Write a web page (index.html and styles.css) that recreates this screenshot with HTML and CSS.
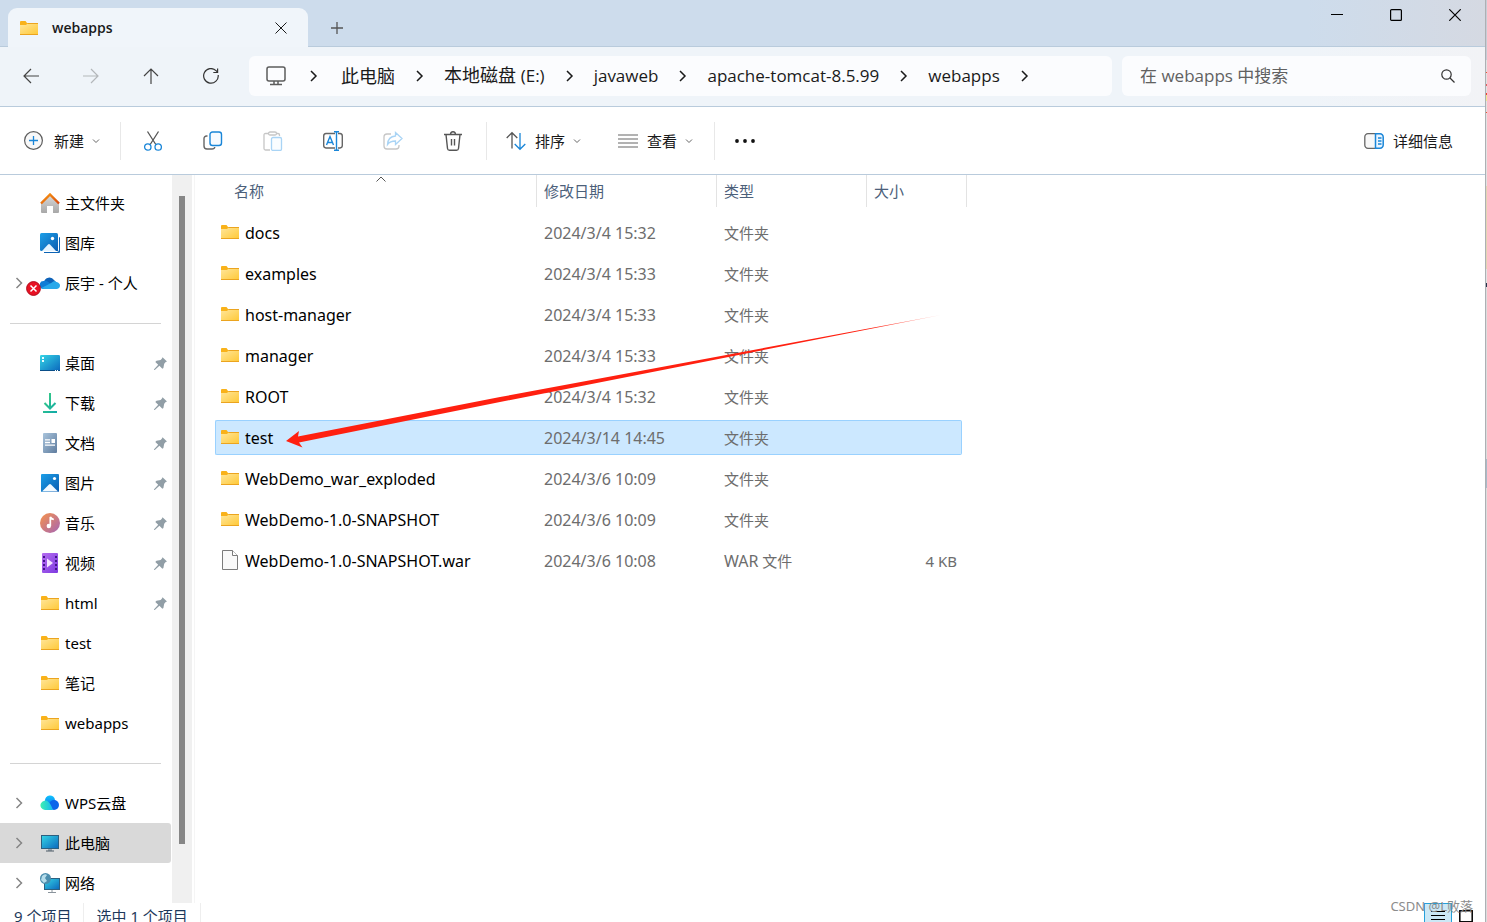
FILE: index.html
```html
<!DOCTYPE html>
<html lang="zh-CN">
<head>
<meta charset="utf-8">
<title>webapps</title>
<link rel="stylesheet" href="styles.css">
</head>
<body>
<svg class="sprite" width="0" height="0" aria-hidden="true">
  <defs>
    <linearGradient id="gFolder" x1="0" y1="0" x2="1" y2="1"><stop offset="0" stop-color="#ffe69a"/><stop offset="1" stop-color="#ffc938"/></linearGradient>
    <linearGradient id="gRoof" x1="0" y1="0" x2="1" y2="1"><stop offset="0" stop-color="#fb9a10"/><stop offset="1" stop-color="#d8470f"/></linearGradient>
    <linearGradient id="gWall" x1="0" y1="0" x2="0" y2="1"><stop offset="0" stop-color="#dcdcdc"/><stop offset="1" stop-color="#a8a8a8"/></linearGradient>
    <linearGradient id="gPic" x1="0" y1="0" x2="1" y2="1"><stop offset="0" stop-color="#1c9fe8"/><stop offset="1" stop-color="#0a5cb0"/></linearGradient>
    <linearGradient id="gScreen" x1="0" y1="0" x2="1" y2="1"><stop offset="0" stop-color="#35d6e6"/><stop offset="1" stop-color="#0b67bd"/></linearGradient>
    <linearGradient id="gDown" x1="0" y1="0" x2="1" y2="1"><stop offset="0" stop-color="#3ecf80"/><stop offset="1" stop-color="#10aaa8"/></linearGradient>
    <linearGradient id="gDoc" x1="0" y1="0" x2="1" y2="1"><stop offset="0" stop-color="#a9c4dc"/><stop offset="1" stop-color="#5f7c9e"/></linearGradient>
    <linearGradient id="gMusic" x1="0" y1="0" x2="1" y2="1"><stop offset="0" stop-color="#f7934a"/><stop offset="1" stop-color="#a565b5"/></linearGradient>
    <linearGradient id="gVideo" x1="0" y1="0" x2="1" y2="1"><stop offset="0" stop-color="#b56df0"/><stop offset="1" stop-color="#7d3ae0"/></linearGradient>
    <linearGradient id="gWps" x1="0" y1="0" x2="1" y2="0"><stop offset="0" stop-color="#3ff0b0"/><stop offset="1" stop-color="#16b8f2"/></linearGradient>
    <linearGradient id="gWpsTop" x1="0" y1="0" x2="0" y2="1"><stop offset="0" stop-color="#10c4ff"/><stop offset="1" stop-color="#0a5fe0"/></linearGradient>
  </defs>
  <symbol id="folder" viewBox="0 0 20 20"><path d="M1 4a1 1 0 0 1 1-1h4.500l1.500 2h11v3H1z" fill="#f9b21a"/><path d="M1 7h6l1.500-1.500H19V16.500H1z" fill="url(#gFolder)"/><path d="M8.500 5.500H19M1 16.500h18" stroke="#eba41f" fill="none"/></symbol>
  <symbol id="file" viewBox="0 0 20 20"><path d="M2.500.5h10l5 5v14h-15z" fill="#f9f9f9" stroke="#7b7b7b"/><path d="M12.500.5v5h5" fill="#fff" stroke="#7b7b7b"/></symbol>
  <symbol id="home" viewBox="0 0 20 20"><path d="M1 9l9-8 9 8v10a1 1 0 0 1-1 1h-5v-7H7v7H2a1 1 0 0 1-1-1z" fill="url(#gWall)"/><path d="M1 10.500L10 1.500l9 9" fill="none" stroke="url(#gRoof)" stroke-width="2.400"/></symbol>
  <symbol id="gallery" viewBox="0 0 20 20"><path d="M4 4h15a1 1 0 0 1 1 1v14a1 1 0 0 1-1 1H4z" fill="#0c63b4"/><path d="M2 18.500h15.500q1 0 1-1V2" fill="none" stroke="#fff"/><rect width="18" height="18" rx="1.500" fill="url(#gPic)"/><path d="M2 18L8 11.500q1-1 2 0L16 18z" fill="#e3f3ff"/><circle cx="12.500" cy="5.500" r="1.700" fill="#fff"/></symbol>
  <symbol id="onedrive" viewBox="0 0 20 20"><path d="M4 9a5.500 5.500 0 0 1 10-2l4 4-8 3z" fill="#0d62b8"/><path d="M4 16a4 4 0 0 1-.5-8q3-1 5.500 1.500l4 3z" fill="#0f7cd6"/><path d="M4 16q-1.500 0-2.500-1L12 9.500q2-2 4.500-.5 3.500 1 3.500 3.500T17 16z" fill="#28a8ea"/></symbol>
  <symbol id="desktop" viewBox="0 0 20 20"><rect y="2" width="20" height="16" rx="1.300" fill="url(#gScreen)"/><path d="M0 17.500h20" stroke="#0a4e88"/><path d="M2 4h2v2H2zM2 7h2v2H2z" fill="#e9fdff"/><path d="M15 17.500h4" stroke="#fff" stroke-dasharray="1 1"/></symbol>
  <symbol id="download" viewBox="0 0 20 20"><path d="M10 0v15M4.500 10l5.500 5.500 5.500-5.500M3 19h14" fill="none" stroke="url(#gDown)" stroke-width="2"/></symbol>
  <symbol id="doc" viewBox="0 0 20 20"><rect x="3" width="14" height="20" rx="1" fill="url(#gDoc)"/><path d="M5 6.800h5M5 9.500h5M5 12.200h10" stroke="#fff" stroke-width="1.300"/><path d="M11.500 6H15v4h-3.500z" fill="#fff"/></symbol>
  <symbol id="picture" viewBox="0 0 20 20"><rect x="1" y="1" width="18" height="18" rx="1" fill="url(#gPic)"/><path d="M2 18.500l7-7q1-1 2 0l7 7z" fill="#f3faff"/><circle cx="14.500" cy="5.500" r="1.600" fill="#fff"/></symbol>
  <symbol id="music" viewBox="0 0 20 20"><circle cx="10" cy="10" r="10" fill="url(#gMusic)"/><circle cx="8.800" cy="13" r="2.200" fill="#fff"/><path d="M10.300 13V4q1 2 3.500 2.500" fill="none" stroke="#fff" stroke-width="1.700"/></symbol>
  <symbol id="video" viewBox="0 0 20 20"><rect x="2" width="16" height="20" rx="1" fill="url(#gVideo)"/><path d="M4 3v16M16 3v16" stroke="#42158a" stroke-width="2" stroke-dasharray="2 2"/><path d="M7 5.500l6 4.500-6 4.500z" fill="#f3e6ff"/></symbol>
  <symbol id="wps" viewBox="0 0 20 20"><path d="M5 8a5 5 0 0 1 10-1l1 6-6 3z" fill="url(#gWpsTop)"/><circle cx="14" cy="12" r="5" fill="#0b66ea"/><path d="M5 17a4.700 4.700 0 1 1 3.500-8q2 1.500 4.500 8z" fill="url(#gWps)"/></symbol>
  <symbol id="pc" viewBox="0 0 20 20"><rect x="1.500" y="2.500" width="17" height="13" fill="url(#gScreen)" stroke="#2c6080"/><path d="M8 16h4v2H8z" fill="#9aa4ac"/><path d="M6 18h8" stroke="#4c5a66"/></symbol>
  <symbol id="network" viewBox="0 0 20 20"><rect x="4.500" y="5.500" width="15" height="11" fill="url(#gScreen)" stroke="#2c6080"/><path d="M12 17v2M8 19.500h8" stroke="#8a949c"/><circle cx="5.500" cy="5.500" r="5.500" fill="#4c8dad"/><path d="M2 3q3-3 5-1L5 5l2 3-3 2-3-3z" fill="#b5dcea"/></symbol>
  <symbol id="pin" viewBox="0 0 13 13"><path d="M8.500 0.300L13 4.500l-1.300.6-1.500 1.600-.8 4.300-1 .8-3-3L.8 12.900H.1v-.7L4.200 7.700 1.300 5l1.200-1.200 4.100-.7L8 1.600z" fill="#919ea6"/></symbol>
  <symbol id="right" viewBox="0 0 8 12"><path d="M1.500 1l5 5-5 5" fill="none" stroke="currentColor" stroke-width="1.500"/></symbol>
  <symbol id="down" viewBox="0 0 8 8"><path d="M1 2.500l3 3 3-3" fill="none" stroke="currentColor"/></symbol>
</svg>

<div class="window">
  <header class="titlebar">
    <div class="tab">
      <svg class="icon"><use href="#folder"/></svg>
      <span class="tab-title">webapps</span>
      <button class="plain tab-close" aria-label="关闭标签页"><svg width="12" height="12" viewBox="0 0 12 12"><path d="M.5.5l11 11M11.500.5l-11 11" stroke="currentColor"/></svg></button>
    </div>
    <button class="plain tab-new" aria-label="新建标签页"><svg width="12" height="12" viewBox="0 0 12 12"><path d="M6 0v12M0 6h12" stroke="#555" stroke-width="1.300"/></svg></button>
    <div class="caption">
      <button class="plain" aria-label="最小化"><svg width="12" height="12" viewBox="0 0 12 12"><path d="M0 5.500h12" stroke="#000"/></svg></button>
      <button class="plain" aria-label="最大化"><svg width="12" height="12" viewBox="0 0 12 12"><rect x=".6" y=".6" width="10.800" height="10.800" rx="1" fill="none" stroke="#000" stroke-width="1.200"/></svg></button>
      <button class="plain" aria-label="关闭"><svg width="12" height="12" viewBox="0 0 12 12"><path d="M.3.3l11.400 11.400M11.700.3L.3 11.700" stroke="#000" stroke-width="1.200"/></svg></button>
    </div>
  </header>

  <div class="navbar">
    <div class="nav-buttons">
      <button class="plain" aria-label="后退"><svg width="16" height="16" viewBox="0 0 16 16" fill="none" stroke="#444" stroke-width="1.200"><path d="M16 8H1M8 1L1 8l7 7"/></svg></button>
      <button class="plain" aria-label="前进"><svg width="16" height="16" viewBox="0 0 16 16" fill="none" stroke="#b3b7ba" stroke-width="1.200"><path d="M0 8h15M8 1l7 7-7 7"/></svg></button>
      <button class="plain" aria-label="上移"><svg width="16" height="16" viewBox="0 0 16 16" fill="none" stroke="#444" stroke-width="1.200"><path d="M8 16V1M1 8l7-7 7 7"/></svg></button>
      <button class="plain" aria-label="刷新"><svg width="16" height="16" viewBox="0 0 16 16" fill="none" stroke="#333" stroke-width="1.200"><path d="M15.200 7A7.300 7.300 0 1 1 13 2.600l1.500 1.400M14.600.5v4h-4.300"/></svg></button>
    </div>
    <nav class="crumbs" aria-label="路径">
      <svg class="icon" viewBox="0 0 20 20" fill="none" stroke="#5c5c5c" stroke-width="1.500"><rect x="1" y="1" width="18" height="14" rx="2"/><path d="M8 15v3M12 15v3M4 18.500h12"/></svg>
      <svg class="sep sep-first"><use href="#right"/></svg>
      <a href="#" class="crumb">此电脑</a>
      <svg class="sep"><use href="#right"/></svg>
      <a href="#" class="crumb">本地磁盘 <span class="latin">(E:)</span></a>
      <svg class="sep"><use href="#right"/></svg>
      <a href="#" class="crumb latin">javaweb</a>
      <svg class="sep"><use href="#right"/></svg>
      <a href="#" class="crumb latin">apache-tomcat-8.5.99</a>
      <svg class="sep"><use href="#right"/></svg>
      <a href="#" class="crumb latin">webapps</a>
      <svg class="sep"><use href="#right"/></svg>
    </nav>
    <div class="search">
      <input type="text" class="search-input" placeholder="在 webapps 中搜索" aria-label="在 webapps 中搜索">
      <svg width="14" height="14" viewBox="0 0 14 14" fill="none" stroke="#333" stroke-width="1.200"><circle cx="5.500" cy="5.500" r="4.700"/><path d="M9 9l4.500 4.500"/></svg>
    </div>
  </div>

  <div class="toolbar">
    <button class="plain tool tool-new">
      <svg class="icon" viewBox="0 0 20 20" fill="none"><circle cx="9.500" cy="9.500" r="8.900" fill="#f8f8f8" stroke="#5e5e5e" stroke-width="1.200"/><path d="M9.500 5v9M5 9.500h9" stroke="#1a86d8" stroke-width="1.300"/></svg>
      <span>新建</span><svg class="caret"><use href="#down"/></svg>
    </button>
    <span class="rule"></span>
    <button class="plain tool-icon" aria-label="剪切"><svg class="icon" viewBox="0 0 20 20" fill="none" stroke-width="1.300"><path d="M4.500.5l8.300 13M15.500.5L7.200 13.500" stroke="#555"/><circle cx="4.800" cy="16" r="3.200" stroke="#1a86d8"/><circle cx="15.200" cy="16" r="3.200" stroke="#1a86d8"/></svg></button>
    <button class="plain tool-icon" aria-label="复制"><svg class="icon" viewBox="0 0 20 20" fill="none" stroke-width="1.400"><path d="M4.500 5H3.500a2.500 2.500 0 0 0-2.500 2.500V15a3 3 0 0 0 3 3h5q2.500 0 2.800-2" stroke="#666"/><rect x="7" y="1" width="11.500" height="13.500" rx="2.500" fill="#f7fbff" stroke="#1a86d8"/></svg></button>
    <button class="plain tool-icon" aria-label="粘贴"><svg class="icon" viewBox="0 0 20 20" fill="none" stroke-width="1.300"><path d="M6 2.500H2.500Q1 2.500 1 4v13.500Q1 19 2.500 19H7M13 2.500h2q1.500 0 1.500 1.500v1" stroke="#c6c6c6"/><rect x="5.500" y="1" width="8" height="3" rx="1.500" stroke="#c6c6c6"/><rect x="8.500" y="6.500" width="10" height="13" rx="1.500" fill="#fafdff" stroke="#a9d4f5"/></svg></button>
    <button class="plain tool-icon" aria-label="重命名"><svg class="icon" viewBox="0 0 20 20" fill="none" stroke-width="1.400"><path d="M12 2.500H3A2.500 2.500 0 0 0 .7 5v9.500A2.500 2.500 0 0 0 3 17h9M15 2.500h2A2.500 2.500 0 0 1 19.300 5v9.500A2.500 2.500 0 0 1 17 17h-2" stroke="#666"/><path d="M3.500 14L7 5.500 10.500 14M4.800 11.500h4.400M13.500 1v18M11 .7h5M11 19.300h5" stroke="#1a86d8"/></svg></button>
    <button class="plain tool-icon" aria-label="共享"><svg class="icon" viewBox="0 0 20 20" fill="none" stroke-width="1.300"><path d="M8 3H4a3 3 0 0 0-3 3v9a3 3 0 0 0 3 3h9a3 3 0 0 0 3-3v-1" stroke="#c6c6c6"/><path d="M12.500 1.500l6.500 6-6.500 6V10Q7 10 4.500 13.500 5 5.500 12.500 5z" stroke="#a9d4f5"/></svg></button>
    <button class="plain tool-icon" aria-label="删除"><svg class="icon" viewBox="0 0 20 20" fill="none" stroke="#555" stroke-width="1.400"><path d="M1 3.500h18M3 3.500l1.500 14q.2 1.800 2 1.800h7q1.800 0 2-1.800L17 3.500M7.500 3.500q0-2.800 2.500-2.800t2.500 2.800M8.500 8v6.500M11.500 8v6.500"/></svg></button>
    <span class="rule rule-tight"></span>
    <button class="plain tool">
      <svg class="icon" viewBox="0 0 20 20" fill="none" stroke-width="1.300"><path d="M6 17.500V2M.7 7L6 1.700 11.300 7" stroke="#555"/><path d="M14 2v16M8.700 13l5.300 5.300L19.300 13" stroke="#1a86d8"/></svg>
      <span>排序</span><svg class="caret"><use href="#down"/></svg>
    </button>
    <button class="plain tool">
      <svg class="icon" viewBox="0 0 20 20" fill="none" stroke="#666" stroke-width="1.200"><path d="M0 4h20M0 8h20M0 12h20M0 16h20"/></svg>
      <span>查看</span><svg class="caret"><use href="#down"/></svg>
    </button>
    <span class="rule rule-tight"></span>
    <button class="plain tool-icon" aria-label="更多"><svg class="icon" viewBox="0 0 20 20" fill="#111"><circle cx="2" cy="10" r="1.900"/><circle cx="10" cy="10" r="1.900"/><circle cx="18" cy="10" r="1.900"/></svg></button>
    <button class="plain tool tool-end">
      <svg class="icon" viewBox="0 0 20 20" fill="none" stroke-width="1.300"><path d="M11 2.700H4A3.200 3.200 0 0 0 .8 6v8A3.200 3.200 0 0 0 4 17.300h7" fill="#f8f8f8" stroke="#666"/><path d="M11.500 2.700H16A3.200 3.200 0 0 1 19.200 6v8a3.200 3.200 0 0 1-3.200 3.300h-4.500z" fill="#eaf5ff" stroke="#1a86d8" stroke-width="1.500"/><path d="M14 7h3.500M14 10h3.500M14 13h3.500" stroke="#1a86d8"/></svg>
      <span>详细信息</span>
    </button>
  </div>

  <main class="content">
    <nav class="sidebar" aria-label="导航窗格">
      <a href="#" class="place"><svg class="icon"><use href="#home"/></svg><span>主文件夹</span></a>
      <a href="#" class="place"><svg class="icon"><use href="#gallery"/></svg><span>图库</span></a>
      <a href="#" class="place"><svg class="expand"><use href="#right"/></svg><svg class="icon"><use href="#onedrive"/></svg><svg class="badge" viewBox="0 0 15 15"><circle cx="7.500" cy="7.500" r="6.900" fill="#e81123" stroke="#b00d1c"/><path d="M4.500 4.500l6 6M10.500 4.500l-6 6" stroke="#fff" stroke-width="1.500"/></svg><span>辰宇 - 个人</span></a>
      <hr class="divider">
      <a href="#" class="place"><svg class="icon"><use href="#desktop"/></svg><span>桌面</span><svg class="pin"><use href="#pin"/></svg></a>
      <a href="#" class="place"><svg class="icon"><use href="#download"/></svg><span>下载</span><svg class="pin"><use href="#pin"/></svg></a>
      <a href="#" class="place"><svg class="icon"><use href="#doc"/></svg><span>文档</span><svg class="pin"><use href="#pin"/></svg></a>
      <a href="#" class="place"><svg class="icon"><use href="#picture"/></svg><span>图片</span><svg class="pin"><use href="#pin"/></svg></a>
      <a href="#" class="place"><svg class="icon"><use href="#music"/></svg><span>音乐</span><svg class="pin"><use href="#pin"/></svg></a>
      <a href="#" class="place"><svg class="icon"><use href="#video"/></svg><span>视频</span><svg class="pin"><use href="#pin"/></svg></a>
      <a href="#" class="place"><svg class="icon"><use href="#folder"/></svg><span>html</span><svg class="pin"><use href="#pin"/></svg></a>
      <a href="#" class="place"><svg class="icon"><use href="#folder"/></svg><span>test</span></a>
      <a href="#" class="place"><svg class="icon"><use href="#folder"/></svg><span>笔记</span></a>
      <a href="#" class="place"><svg class="icon"><use href="#folder"/></svg><span>webapps</span></a>
      <hr class="divider">
      <a href="#" class="place"><svg class="expand"><use href="#right"/></svg><svg class="icon"><use href="#wps"/></svg><span>WPS云盘</span></a>
      <a href="#" class="place current"><svg class="expand"><use href="#right"/></svg><svg class="icon"><use href="#pc"/></svg><span>此电脑</span></a>
      <a href="#" class="place"><svg class="expand"><use href="#right"/></svg><svg class="icon"><use href="#network"/></svg><span>网络</span></a>
    </nav>
    <div class="scrollbar"><div class="thumb"></div></div>
    <section class="files">
      <table class="list">
        <colgroup><col class="c-name"><col class="c-date"><col class="c-type"><col class="c-size"></colgroup>
        <thead>
          <tr><th class="name">名称<svg class="sorted" viewBox="0 0 10 6"><path d="M.5 5.500L5 1l4.500 4.500" fill="none" stroke="#555"/></svg></th><th>修改日期</th><th>类型</th><th class="last">大小</th></tr>
        </thead>
        <tbody>
          <tr><td class="name"><svg class="icon"><use href="#folder"/></svg>docs</td><td class="date">2024/3/4 15:32</td><td>文件夹</td><td></td></tr>
          <tr><td class="name"><svg class="icon"><use href="#folder"/></svg>examples</td><td class="date">2024/3/4 15:33</td><td>文件夹</td><td></td></tr>
          <tr><td class="name"><svg class="icon"><use href="#folder"/></svg>host-manager</td><td class="date">2024/3/4 15:33</td><td>文件夹</td><td></td></tr>
          <tr><td class="name"><svg class="icon"><use href="#folder"/></svg>manager</td><td class="date">2024/3/4 15:33</td><td>文件夹</td><td></td></tr>
          <tr><td class="name"><svg class="icon"><use href="#folder"/></svg>ROOT</td><td class="date">2024/3/4 15:32</td><td>文件夹</td><td></td></tr>
          <tr class="selected"><td class="name"><svg class="icon"><use href="#folder"/></svg>test</td><td class="date">2024/3/14 14:45</td><td>文件夹</td><td></td></tr>
          <tr><td class="name"><svg class="icon"><use href="#folder"/></svg>WebDemo_war_exploded</td><td class="date">2024/3/6 10:09</td><td>文件夹</td><td></td></tr>
          <tr><td class="name"><svg class="icon"><use href="#folder"/></svg>WebDemo-1.0-SNAPSHOT</td><td class="date">2024/3/6 10:09</td><td>文件夹</td><td></td></tr>
          <tr><td class="name"><svg class="icon"><use href="#file"/></svg>WebDemo-1.0-SNAPSHOT.war</td><td class="date">2024/3/6 10:08</td><td><span class="ext">WAR</span> 文件</td><td class="size">4 KB</td></tr>
        </tbody>
      </table>
      <svg class="arrow" width="656" height="134" viewBox="0 0 656 134">
        <defs><linearGradient id="gArrow" x1="0" x2="1"><stop offset=".9" stop-color="#ff2010"/><stop offset="1" stop-color="#ff2010" stop-opacity=".4"/></linearGradient></defs>
        <path d="M0 126L13 116l-1 5.500L214 82 655 0 214 87 13 127.500l3.500 5z" fill="url(#gArrow)"/>
      </svg>
    </section>
  </main>

  <footer class="status">
    <span class="count">9 个项目</span>
    <span class="count">选中 1 个项目</span>
    <div class="views">
      <button class="plain view active" aria-label="详细信息视图"><svg width="14" height="14" viewBox="0 0 14 14" stroke="#000"><path d="M0 1.500h14M0 5.500h14M0 9.500h14M0 13.500h14"/></svg></button>
      <button class="plain view" aria-label="大图标视图"><svg width="14" height="14" viewBox="0 0 14 14"><rect x=".8" y=".8" width="12.400" height="11" fill="#fff" stroke="#000" stroke-width="1.500"/></svg></button>
    </div>
    <span class="watermark">CSDN @L败落</span>
  </footer>
</div>
<div class="backdrop"></div>
</body>
</html>
```
FILE: styles.css
```css
* { box-sizing: border-box; }

html, body { height: 100%; }

body {
  margin: 0;
  display: grid;
  grid-template-columns: minmax(0, 1fr) 1px;
  overflow: hidden;
  background: #fff;
  color: #1a1a1a;
  font: 15px/20px "Noto Sans", "Noto Sans CJK SC", sans-serif;
}

a { color: inherit; text-decoration: none; }
svg { display: block; flex: none; }
.sprite { position: absolute; }
.icon { width: 20px; height: 20px; }

.plain {
  display: flex;
  align-items: center;
  justify-content: center;
  padding: 0;
  border: 0;
  background: none;
  color: inherit;
  font: inherit;
}

.window {
  display: flex;
  flex-direction: column;
  border-right: 1px solid #adb0b4;
}

.backdrop {
  background: linear-gradient(#c9cdd6 60px, #e2e2e2 60px 72px, #f05030 72px 73px, #e2e2e2 73px 84px, #e06060 84px 86px, #e2e2e2 86px 93px, #f04030 93px 95px, #f0e890 95px 101px, #e2e2e2 101px 112px, #f05030 112px 113px, #e2e2e2 113px 186px, #e3d5b4 186px 269px, #e2e2e2 269px 283px, #25304a 283px 287px, #dcdcdc 287px 459px, #a9bac8 459px 488px, #dcdcdc 488px);
}

/* Title bar */
.titlebar {
  display: flex;
  height: 47px;
  padding: 8px 1px 0 8px;
  border-bottom: 1px solid #b9cbdc;
  background: linear-gradient(90deg, #cddcec 88%, #d5d9e2);
}

.tab {
  display: flex;
  align-items: center;
  width: 300px;
  height: 39px;
  padding: 0 21px 0 11px;
  border-radius: 9px 9px 0 0;
  background: #f0f5fa;
}

.tab-title {
  flex: 1;
  margin-left: 13px;
  font-family: "Open Sans", sans-serif;
  font-size: 14px;
  font-weight: 600;
}

.tab-new { width: 58px; height: 40px; }

.caption {
  display: flex;
  height: 14px;
  margin-left: auto;
}
.caption .plain { width: 59px; }

/* Address row */
.navbar {
  display: flex;
  align-items: center;
  height: 60px;
  padding: 0 14px 2px 1px;
  border-bottom: 1px solid #b9cbdc;
  background: linear-gradient(90deg, #eff4f9 88%, #f2f3f6);
}

.nav-buttons { display: flex; margin-right: 8px; }
.nav-buttons .plain { width: 60px; height: 40px; }

.crumbs {
  display: flex;
  flex: 846 1 0;
  align-items: center;
  height: 40px;
  min-width: 0;
  margin-right: 10px;
  padding-left: 17px;
  border-radius: 6px;
  background: #fbfcfe;
  font-size: 18px;
}
.sep { width: 49px; height: 12px; }
.sep-first { width: 55px; }
.latin { font-family: "Open Sans", sans-serif; font-size: 17px; }

.search {
  display: flex;
  flex: 315 1 0;
  align-items: center;
  height: 40px;
  min-width: 0;
  padding: 0 16px 0 18px;
  border-radius: 6px;
  background: #fbfcfe;
}
.search-input {
  flex: 1;
  min-width: 0;
  padding: 0;
  border: 0;
  outline: 0;
  background: none;
  font: 17px/24px "Open Sans", "Noto Sans CJK SC", sans-serif;
}
.search-input::placeholder { color: #616161; opacity: 1; }

/* Command bar */
.toolbar {
  display: flex;
  align-items: center;
  height: 68px;
  padding: 0 14px 0 5px;
  border-bottom: 1px solid #b9cbdc;
}
.tool { height: 40px; padding: 0 18px 0 19px; }
.tool .icon { margin-right: 9px; }
.tool-new .icon { margin-right: 10px; }
.tool .caret { width: 8px; height: 8px; margin-left: 8px; color: #666; }
.tool-icon { width: 60px; height: 40px; }
.tool-end { margin-left: auto; }
.rule { width: 1px; height: 38px; margin: 0 2px; background: #e8e8e8; }
.rule-tight { margin: 0 0 0 3px; }

/* Body */
.content { display: flex; color: #000; }

.sidebar { width: 172px; padding-top: 8px; }

.place {
  position: relative;
  display: flex;
  align-items: center;
  height: 40px;
  margin-right: 1px;
  padding: 0 4px 0 40px;
}
.place span { margin-left: 5px; white-space: nowrap; }
.current { border-radius: 0 3px 3px 0; background: #d9d9d9; }
.expand { position: absolute; left: 15px; width: 8px; height: 12px; color: #858585; }
.badge { position: absolute; left: 26px; bottom: 7px; width: 15px; height: 15px; }
.pin { width: 13px; height: 13px; margin-left: auto; }

.divider {
  height: 1px;
  margin: 20px 11px 19px 10px;
  border: 0;
  background: #d4d4d4;
}

.scrollbar { width: 20px; padding: 21px 7px 59px; background: #f0f0f0; }
.thumb { width: 6px; height: 100%; background: #868686; }

.files {
  position: relative;
  flex: 1;
  min-width: 0;
  margin-left: 2px;
  padding-left: 20px;
  border-left: 1px solid #f5f5f5;
}

.list {
  width: 747px;
  margin-top: -6px;
  border-spacing: 0 6px;
  table-layout: fixed;
  color: #6d6d6d;
}
.c-name { width: 322px; }
.c-date { width: 180px; }
.c-type { width: 150px; }

th, td { padding: 0 0 0 7px; text-align: left; white-space: nowrap; }
th {
  position: relative;
  height: 34px;
  padding-bottom: 2px;
  color: #4c607a;
  font-weight: 400;
}
th::after {
  content: "";
  position: absolute;
  top: 0;
  right: 0;
  width: 1px;
  height: 32px;
  background: #e3e3e3;
}
th.last::after { right: -5px; }
th.name { padding-left: 19px; }
.sorted { position: absolute; top: 1px; left: 161px; width: 10px; height: 6px; }

td { height: 35px; }
td.name { padding-left: 5px; color: #000; font-size: 16px; }
td.name .icon { display: inline-block; margin-right: 5px; vertical-align: -3px; }
td.date, .ext { font-size: 16px; }
td.size { padding-right: 5px; text-align: right; }

.selected td {
  border: solid #99d1ff;
  border-width: 1px 0;
  background: #cce8ff;
}
.selected td:first-child { border-left-width: 1px; border-radius: 2px 0 0 2px; padding-left: 4px; }
.selected td:last-child { border-right-width: 1px; border-radius: 0 2px 2px 0; }

.arrow { position: absolute; top: 140px; left: 91px; }

/* Status bar */
.status {
  position: relative;
  display: flex;
  align-items: flex-start;
  height: 28px;
  padding: 0 5px 0 14px;
  color: #1e395b;
}
.count { height: 28px; padding: 3px 12px 0 0; margin-right: 12px; border-right: 1px solid #eee; }
.views { display: flex; margin-left: auto; }
.view { width: 28px; height: 28px; }
.view.active { border: 1px solid #26a0da; background: #cbe8f6; }
.watermark {
  position: absolute;
  top: -7px;
  right: 12px;
  color: #8c8c8c;
  font-size: 13px;
}
```
